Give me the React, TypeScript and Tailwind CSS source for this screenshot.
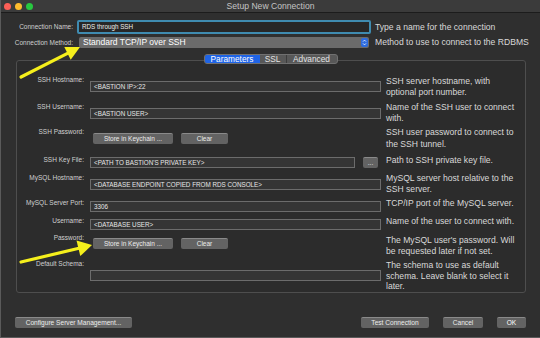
import React from 'react'

const font = { fontFamily: '"Liberation Sans", Arial, sans-serif' }

function Input({ value = '', className = '' }: { value?: string; className?: string }) {
    return (
        <div className={`flex h-[11px] items-center border border-[#6c6c6c] bg-[#353535] pl-[3px] text-[6.3px] text-[#e6e6e6] ${className}`}>
            {value}
        </div>
    )
}

function Btn({ children, className = '' }: { children: React.ReactNode; className?: string }) {
    return (
        <div className={`flex h-[11px] items-center justify-center rounded-[2px] border-t border-[#8a8a8a] bg-[#636363] text-[6.5px] text-[#ececec] ${className}`}>
            {children}
        </div>
    )
}

function Hint({ children, className = '' }: { children: React.ReactNode; className?: string }) {
    return <div className={`ml-[5px] w-[134px] text-[8.6px] leading-[10.5px] text-[#d9d9d9] ${className}`}>{children}</div>
}

function Label({ children }: { children: React.ReactNode }) {
    return <div className="w-[67px] shrink-0 text-right text-[6.5px] leading-[10px] text-[#d0d0d0]">{children}</div>
}

function KeychainButtons() {
    return (
        <div className="flex gap-[8px] pl-[3px]">
            <Btn className="w-[80px]">Store in Keychain ...</Btn>
            <Btn className="w-[47px]">Clear</Btn>
        </div>
    )
}

export default function App() {
    return (
        <div style={font} className="relative flex h-[338px] w-[540px] flex-col overflow-hidden border-b border-l border-[#5a5a5a] bg-[#2f2f2f]">
            {/* title bar */}
            <div className="grid h-[13px] shrink-0 grid-cols-[1fr_auto_1fr] items-center border-b border-[#1c1c1c] bg-[#3b3b3b]">
                <div className="flex gap-[4px] pl-[3px]">
                    <span className="h-[7px] w-[7px] rounded-full bg-[#fc5f57]" />
                    <span className="h-[7px] w-[7px] rounded-full bg-[#fdbc2e]" />
                    <span className="h-[7px] w-[7px] rounded-full bg-[#28c840]" />
                </div>
                <div className="text-[8.6px] text-[#c4c4c4]">Setup New Connection</div>
                <div />
            </div>

            {/* connection name */}
            <div className="mt-[7px] flex h-[14px] items-center">
                <div className="w-[72px] text-right text-[6.5px] text-[#d0d0d0]">Connection Name:</div>
                <div className="ml-[4px] flex h-[14px] w-[294px] items-center rounded-[2px] border-2 border-[#3f8bb0] bg-[#272727] pl-[3px] text-[6.3px] text-[#ececec]">
                    RDS through SSH
                </div>
                <div className="ml-[4px] text-[8.6px] text-[#d9d9d9]">Type a name for the connection</div>
            </div>

            {/* connection method */}
            <div className="mt-[3px] flex h-[11px] items-center">
                <div className="w-[72px] text-right text-[6.5px] text-[#d0d0d0]">Connection Method:</div>
                <div className="ml-[6px] flex h-[11px] w-[290px] items-center justify-between rounded-[2px] bg-[#6b6b6b] pl-[4px] pr-[1px] text-[8.5px] text-white">
                    <span>Standard TCP/IP over SSH</span>
                    <span className="flex h-[9px] w-[7px] flex-col items-center justify-center rounded-[2px] bg-[#2e6ce0]">
                        <svg width="5" height="7" viewBox="0 0 5 7" fill="none" stroke="white" strokeWidth="0.8">
                            <path d="M1 2.6 L2.5 1.1 L4 2.6" />
                            <path d="M1 4.4 L2.5 5.9 L4 4.4" />
                        </svg>
                    </span>
                </div>
                <div className="ml-[6px] text-[8.6px] text-[#d9d9d9]">Method to use to connect to the RDBMS</div>
            </div>

            {/* tabs */}
            <div className="relative z-10 mt-[6px] flex justify-center">
                <div className="flex h-[10px] overflow-hidden rounded-[3px] border border-[#707070] bg-[#585858] text-[8.3px] leading-[8px]">
                    <div className="flex w-[55px] items-center justify-center bg-[#1f64e6] text-white">Parameters</div>
                    <div className="flex w-[27px] items-center justify-center border-r border-[#3c3c3c] text-[#e4e4e4]">SSL</div>
                    <div className="flex w-[50px] items-center justify-center text-[#e4e4e4]">Advanced</div>
                </div>
            </div>

            {/* parameters group */}
            <div className="-mt-[4px] ml-[15px] flex h-[233px] w-[510px] flex-col rounded-[3px] border border-[#4e4e4e] bg-[#2c2c2c] pt-[14px]">
                <div className="flex h-[27px]">
                    <Label>SSH Hostname:</Label>
                    <div className="ml-[6px] mt-[6px] w-[291px]"><Input value="<BASTION IP>:22" /></div>
                    <Hint className="mt-[1px]">SSH server hostname, with optional port number.</Hint>
                </div>
                <div className="flex h-[25px]">
                    <Label>SSH Username:</Label>
                    <div className="ml-[6px] mt-[6px] w-[291px]"><Input value="<BASTION USER>" /></div>
                    <Hint>Name of the SSH user to connect with.</Hint>
                </div>
                <div className="flex h-[28px]">
                    <Label>SSH Password:</Label>
                    <div className="ml-[6px] mt-[6px] w-[291px]"><KeychainButtons /></div>
                    <Hint className="leading-[11.5px]">SSH user password to connect to the SSH tunnel.</Hint>
                </div>
                <div className="flex h-[18px]">
                    <Label>SSH Key File:</Label>
                    <div className="ml-[6px] mt-[2px] flex w-[291px]">
                        <Input value="<PATH TO BASTION'S PRIVATE KEY>" className="w-[265px]" />
                        <Btn className="ml-[8px] w-[15px] leading-[6px]">...</Btn>
                    </div>
                    <Hint>Path to SSH private key file.</Hint>
                </div>
                <div className="flex h-[25px]">
                    <Label>MySQL Hostname:</Label>
                    <div className="ml-[6px] mt-[6px] w-[291px]"><Input value="<DATABASE ENDPOINT COPIED FROM RDS CONSOLE>" /></div>
                    <Hint>MySQL server host relative to the SSH server.</Hint>
                </div>
                <div className="flex h-[18px]">
                    <Label>MySQL Server Port:</Label>
                    <div className="ml-[6px] mt-[3px] w-[291px]"><Input value="3306" /></div>
                    <Hint>TCP/IP port of the MySQL server.</Hint>
                </div>
                <div className="flex h-[17px]">
                    <Label>Username:</Label>
                    <div className="ml-[6px] mt-[3px] w-[291px]"><Input value="<DATABASE USER>" /></div>
                    <Hint>Name of the user to connect with.</Hint>
                </div>
                <div className="flex h-[26px]">
                    <Label>Password:</Label>
                    <div className="ml-[6px] mt-[5px] w-[291px]"><KeychainButtons /></div>
                    <Hint className="mt-[2px]">The MySQL user's password. Will be requested later if not set.</Hint>
                </div>
                <div className="flex">
                    <Label>Default Schema:</Label>
                    <div className="ml-[6px] mt-[11px] w-[291px]"><Input /></div>
                    <Hint className="mt-[1px]">The schema to use as default schema. Leave blank to select it later.</Hint>
                </div>
            </div>

            {/* bottom buttons */}
            <div className="mt-[24px] flex items-center px-[14px]">
                <Btn className="w-[117px] text-[6.6px]">Configure Server Management...</Btn>
                <div className="ml-auto flex gap-[14px]">
                    <Btn className="w-[68px] text-[6.6px]">Test Connection</Btn>
                    <Btn className="w-[40px] text-[6.6px]">Cancel</Btn>
                    <Btn className="w-[29px] border-[#4b8cff] bg-[#1f64e6] text-[6.6px] text-white">OK</Btn>
                </div>
            </div>

            {/* annotation arrows */}
            <svg className="pointer-events-none absolute left-0 top-0" width="540" height="338" viewBox="0 0 540 338">
                <line x1="20" y1="77" x2="68" y2="52.6" stroke="#f5ef1c" strokeWidth="3.2" strokeLinecap="round" />
                <polygon points="79,47 69.7,59.7 63.3,47.1" fill="#f5ef1c" />
                <line x1="20" y1="262" x2="79" y2="248" stroke="#f5ef1c" strokeWidth="3.2" strokeLinecap="round" />
                <polygon points="91,245 79.3,256.1 75.5,240.5" fill="#f5ef1c" />
            </svg>
        </div>
    )
}
